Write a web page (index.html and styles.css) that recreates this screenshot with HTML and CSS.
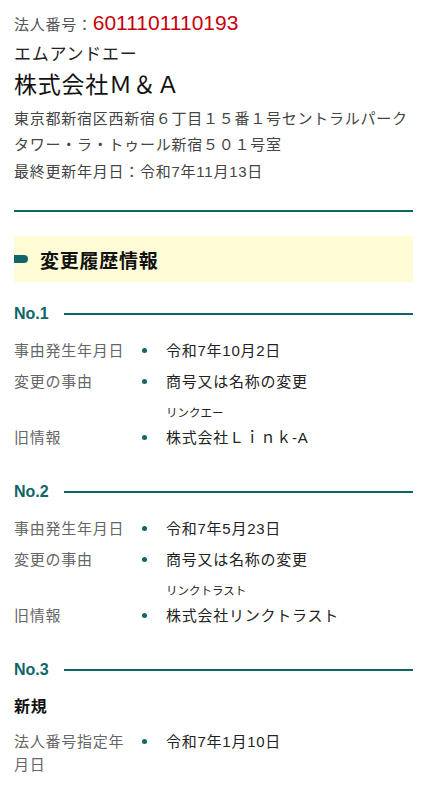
FILE: index.html
```html
<!DOCTYPE html>
<html lang="ja">
<head>
<meta charset="utf-8">
<meta name="viewport" content="width=device-width, initial-scale=1">
<title>株式会社Ｍ＆Ａ｜変更履歴情報</title>
<link rel="stylesheet" href="styles.css">
</head>
<body>
<main class="page">
  <p class="corp-no"><span class="corp-no__label">法人番号：</span><span class="corp-no__value">6011101110193</span></p>
  <p class="corp-kana">エムアンドエー</p>
  <h1 class="corp-name">株式会社Ｍ＆Ａ</h1>
  <p class="corp-address">東京都新宿区西新宿６丁目１５番１号セントラルパークタワー・ラ・トゥール新宿５０１号室</p>
  <p class="corp-updated">最終更新年月日：令和7年11月13日</p>

  <hr class="divider">

  <section class="history">
    <h2 class="history__title">変更履歴情報</h2>

    <article class="entry">
      <h3 class="entry__no">No.1</h3>
      <dl class="entry__list">
        <div class="row">
          <dt class="row__label">事由発生年月日</dt>
          <dd class="row__value"><span class="row__text">令和7年10月2日</span></dd>
        </div>
        <div class="row">
          <dt class="row__label">変更の事由</dt>
          <dd class="row__value"><span class="row__text">商号又は名称の変更</span></dd>
        </div>
        <div class="row row--kana">
          <dt class="row__label">旧情報</dt>
          <dd class="row__value">
            <span class="row__text">
              <span class="row__kana">リンクエー</span>
              <span class="row__main">株式会社Ｌｉｎｋ-A</span>
            </span>
          </dd>
        </div>
      </dl>
    </article>

    <article class="entry">
      <h3 class="entry__no">No.2</h3>
      <dl class="entry__list">
        <div class="row">
          <dt class="row__label">事由発生年月日</dt>
          <dd class="row__value"><span class="row__text">令和7年5月23日</span></dd>
        </div>
        <div class="row">
          <dt class="row__label">変更の事由</dt>
          <dd class="row__value"><span class="row__text">商号又は名称の変更</span></dd>
        </div>
        <div class="row row--kana">
          <dt class="row__label">旧情報</dt>
          <dd class="row__value">
            <span class="row__text">
              <span class="row__kana">リンクトラスト</span>
              <span class="row__main">株式会社リンクトラスト</span>
            </span>
          </dd>
        </div>
      </dl>
    </article>

    <article class="entry">
      <h3 class="entry__no">No.3</h3>
      <p class="entry__type">新規</p>
      <dl class="entry__list">
        <div class="row">
          <dt class="row__label">法人番号指定年月日</dt>
          <dd class="row__value"><span class="row__text">令和7年1月10日</span></dd>
        </div>
      </dl>
    </article>
  </section>
</main>
</body>
</html>
```

FILE: styles.css
```css
* {
  box-sizing: border-box;
}

body {
  margin: 0;
  background: #fff;
  color: #222;
  font-family: "Liberation Sans", Arial, "Noto Sans CJK JP", sans-serif;
  font-size: 15px;
  letter-spacing: 0.05em;
}

p, h1, h2, h3, dl, dd {
  margin: 0;
}

.page {
  padding: 8px 14px 0;
}

/* corporate header */
.corp-no {
  display: flex;
  align-items: baseline;
  height: 30px;
  line-height: 30px;
}

.corp-no__label {
  color: #555;
}

.corp-no__value {
  color: #c8000a;
  font-size: 21px;
  letter-spacing: 0;
}

.corp-kana {
  margin-top: 3px;
  font-size: 17px;
  line-height: 28px;
  color: #222;
}

.corp-name {
  font-size: 23px;
  font-weight: normal;
  line-height: 32px;
  color: #111;
}

.corp-address {
  margin-top: 5px;
  line-height: 26px;
  color: #444;
}

.corp-updated {
  margin-top: 1px;
  line-height: 26px;
  color: #444;
}

.divider {
  margin: 25px 0 0;
  border: 0;
  border-top: 2px solid #0f6668;
}

/* change history */
.history__title {
  display: flex;
  align-items: center;
  gap: 12px;
  margin-top: 24px;
  height: 46px;
  background: #fffcd6;
  font-size: 19px;
  font-weight: bold;
  color: #111;
}

.history__title::before {
  content: "";
  width: 14px;
  height: 8px;
  border-radius: 0 4px 4px 0;
  background: #0f6668;
}

.entry {
  margin-top: 27px;
}

.entry:first-of-type {
  margin-top: 20px;
}

.entry__no {
  display: flex;
  align-items: center;
  gap: 15px;
  font-size: 16px;
  font-weight: bold;
  line-height: 23px;
  letter-spacing: 0;
  color: #0f6668;
}

.entry__no::after {
  content: "";
  flex: 1;
  height: 2px;
  background: #0f6668;
}

.entry__type {
  margin-top: 14px;
  font-size: 16px;
  font-weight: bold;
  line-height: 24px;
  color: #111;
}

.entry__list {
  margin-top: 10px;
}

.entry__type + .entry__list {
  margin-top: 7px;
}

.row {
  display: grid;
  grid-template-columns: 118px 1fr;
  align-items: start;
  padding: 4px 0;
  line-height: 23px;
}

.row--kana {
  align-items: end;
}

.row__label {
  color: #666;
}

.row__value {
  display: grid;
  grid-template-columns: 24px 1fr;
  column-gap: 10px;
  align-items: end;
  color: #222;
}

.row__value::before {
  content: "";
  justify-self: center;
  width: 5px;
  height: 5px;
  margin-bottom: 9px;
  border-radius: 50%;
  background: #0f6668;
}

.row__text {
  display: flex;
  flex-direction: column;
}

.row__kana {
  font-size: 11.5px;
  line-height: 25px;
  letter-spacing: 0;
  color: #222;
}
```
